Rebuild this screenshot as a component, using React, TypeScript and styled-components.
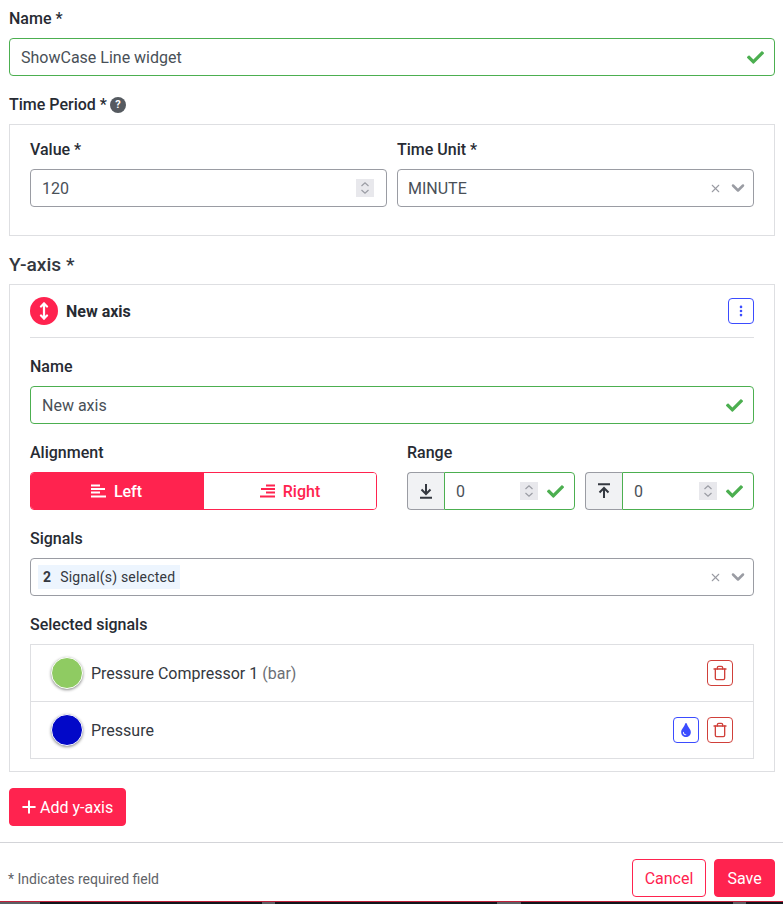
import React from 'react';
import styled, { createGlobalStyle } from 'styled-components';
import { ChevronDown, X, Plus, Trash, MoveVertical, EllipsisVertical } from 'lucide-react';
import { FaCheck, FaTint } from 'react-icons/fa';

const GlobalStyle = createGlobalStyle`
  html, body { margin: 0; padding: 0; background: #fff; }
  body { font-family: Roboto, "Noto Sans", sans-serif; color: #272b33; }
`;

const Page = styled.div`
  width: 783px;
  height: 904px;
  overflow: hidden;
  display: flex;
  flex-direction: column;
`;

const Form = styled.div`
  padding: 10px 8px 0 9px;
`;

const Label = styled.div`
  font-size: 16px;
  font-weight: 500;
  line-height: 18px;
  color: #272b33;
  margin-bottom: 10px;
  display: flex;
  align-items: center;
  gap: 3px;
`;

const PeriodLabel = styled(Label)`
  margin: 20px 0 0;
`;

const HelpDot = styled.span`
  width: 16px;
  height: 16px;
  border-radius: 50%;
  background: #555a60;
  color: #fff;
  font-size: 11px;
  font-weight: 700;
  display: inline-flex;
  align-items: center;
  justify-content: center;
`;

const Field = styled.div<{ $valid?: boolean }>`
  height: 38px;
  box-sizing: border-box;
  border: 1px solid ${p => (p.$valid ? '#4caf50' : '#9a9ca3')};
  border-radius: 4px;
  display: flex;
  align-items: center;
  padding: 0 10px 0 11px;
  font-size: 16px;
  color: #495057;
  background: #fff;
`;

const SelectField = styled(Field)`
  padding: 0 12px 0 10px;
`;

const Grow = styled.span`
  flex: 1;
`;

const Fieldset = styled.div`
  margin-top: 10px;
  border: 1px solid #dedfe2;
  padding: 16px 20px 28px;
  height: 112px;
  box-sizing: border-box;
  display: grid;
  grid-template-columns: 357px 357px;
  column-gap: 10px;
`;

const Heading = styled.div`
  font-size: 19.2px;
  font-weight: 500;
  line-height: 22px;
  color: #343840;
  margin-top: 18px;
`;

const AxisCard = styled.div`
  margin-top: 8px;
  border: 1px solid #dedfe2;
  padding: 12px 20px 12px;
  height: 488px;
  box-sizing: border-box;
`;

const AxisHeader = styled.div`
  display: flex;
  align-items: center;
  gap: 8px;
  height: 28px;
  padding-bottom: 12px;
  border-bottom: 1px solid #dedfe2;
  margin-bottom: 20px;
`;

const AxisBadge = styled.span`
  width: 28px;
  height: 28px;
  border-radius: 50%;
  background: #ff234f;
  color: #fff;
  display: inline-flex;
  align-items: center;
  justify-content: center;
`;

const AxisTitle = styled.span`
  font-size: 16px;
  font-weight: 700;
  flex: 1;
  color: #272b33;
`;

const IconButton = styled.button<{ $tone: 'blue' | 'red' }>`
  width: 26px;
  height: 26px;
  padding: 0;
  border-radius: 4px;
  background: #fff;
  border: 1px solid ${p => (p.$tone === 'blue' ? '#3b4cff' : '#d0403a')};
  color: ${p => (p.$tone === 'blue' ? '#3b4cff' : '#d0403a')};
  display: inline-flex;
  align-items: center;
  justify-content: center;
`;

const TwoCols = styled.div`
  display: grid;
  grid-template-columns: 347px 347px;
  column-gap: 30px;
  margin-top: 20px;
`;

const Segments = styled.div`
  display: flex;
  height: 38px;
  box-sizing: border-box;
  border: 1px solid #ff234f;
  border-radius: 4px;
  overflow: hidden;
`;

const Segment = styled.div<{ $active?: boolean }>`
  flex: ${p => (p.$active ? '0 0 173px' : '1')};
  box-sizing: border-box;
  padding-right: ${p => (p.$active ? '2px' : '0')};
  display: flex;
  align-items: center;
  justify-content: center;
  gap: 8px;
  font-size: 16px;
  font-weight: 500;
  background: ${p => (p.$active ? '#ff234f' : '#fff')};
  color: ${p => (p.$active ? '#fff' : '#ff234f')};
`;

const RangeRow = styled.div`
  display: grid;
  grid-template-columns: 168px 169px;
  column-gap: 10px;
`;

const RangeGroup = styled.div`
  display: flex;
  height: 38px;
`;

const RangeAddon = styled.div`
  width: 37px;
  box-sizing: border-box;
  background: #f1f2f4;
  border: 1px solid #9a9ca3;
  border-right: none;
  border-radius: 4px 0 0 4px;
  display: flex;
  align-items: center;
  justify-content: center;
  color: #343840;
`;

const RangeInput = styled(Field)`
  flex: 1;
  border-radius: 0 4px 4px 0;
`;

const Spinner = styled.span<{ $gap: number }>`
  width: 18px;
  height: 18px;
  background: #e8e8ec;
  color: #9a9ca3;
  margin-right: ${p => p.$gap}px;
  display: inline-flex;
  align-items: center;
  justify-content: center;
`;

const Section = styled.div`
  margin-top: 20px;
`;

const ValueChip = styled.span`
  background: #edf5fe;
  height: 24px;
  display: inline-flex;
  align-items: center;
  padding: 0 5px;
  gap: 9px;
  font-size: 14px;
  letter-spacing: 0.2px;
  color: #343840;
  margin-left: -3px;
`;

const ChipCount = styled.b`
  font-weight: 700;
  font-size: 14px;
`;

const ClearIcon = styled.span`
  color: #9a9ca3;
  display: inline-flex;
  margin-right: 6px;
`;

const Caret = styled.span`
  color: #9a9ca3;
  display: inline-flex;
  margin-right: -7px;
`;

const SignalList = styled.div`
  border: 1px solid #dedfe2;
`;

const SignalRow = styled.div`
  height: 56px;
  box-sizing: border-box;
  display: flex;
  align-items: center;
  padding: 0 20px;
  gap: 8px;
  font-size: 16px;
  color: #343840;
  & + & {
    border-top: 1px solid #dedfe2;
    height: 57px;
  }
`;

const Swatch = styled.span<{ $color: string }>`
  width: 32px;
  height: 32px;
  border-radius: 50%;
  box-sizing: border-box;
  background: ${p => p.$color};
  border: 1px solid #fff;
  box-shadow: 0 1px 3px rgba(0, 0, 0, 0.45);
`;

const Unit = styled.span`
  color: #6c6f76;
`;

const RowActions = styled.span`
  display: flex;
  gap: 8px;
`;

const PrimaryButton = styled.button`
  height: 38px;
  border: 1px solid #ff234f;
  border-radius: 4px;
  background: #ff234f;
  color: #fff;
  font-family: inherit;
  font-size: 16px;
  padding: 0;
  width: 61px;
  display: inline-flex;
  align-items: center;
  justify-content: center;
`;

const AddButton = styled(PrimaryButton)`
  margin-top: 16px;
  width: 117px;
  padding-left: 9px;
  justify-content: flex-start;
  gap: 1px;
`;

const Footer = styled.div`
  margin-top: 16px;
  border-top: 1px solid #d3d4d8;
  padding: 16px 8px 0 8px;
  display: flex;
  align-items: center;
  gap: 8px;
`;

const Note = styled.span`
  flex: 1;
  font-size: 14px;
  color: #5f6368;
  padding-top: 2px;
`;

const CancelButton = styled(PrimaryButton)`
  width: 74px;
  background: #fff;
  color: #ff234f;
`;

const BottomEdge = styled.div`
  margin-top: auto;
  height: 3px;
  box-sizing: border-box;
  border-top: 1px solid #c0203a;
  background: linear-gradient(
    to right,
    #5b5f64 0 40px,
    #10151c 40px 262px,
    #5b5f64 262px 275px,
    #10151c 275px 497px,
    #5b5f64 497px 521px,
    #10151c 521px 733px,
    #5b5f64 733px 746px,
    #10151c 746px
  );
`;

const Tick = () => <FaCheck size={17} color="#4caf50" />;

const Stepper = ({ gap }: { gap: number }) => (
  <Spinner $gap={gap}>
    <svg width="10" height="14" viewBox="0 0 10 14" fill="none" stroke="currentColor" strokeWidth="1.2">
      <path d="M1.5 5 5 1.8 8.5 5" />
      <path d="M1.5 9 5 12.2 8.5 9" />
    </svg>
  </Spinner>
);

const SelectControls = () => (
  <>
    <ClearIcon><X size={13} strokeWidth={2} /></ClearIcon>
    <Caret><ChevronDown size={20} strokeWidth={3} /></Caret>
  </>
);

const AlignLeftIcon = () => (
  <svg width="15" height="14" viewBox="0 0 15 14" fill="none" stroke="currentColor" strokeWidth="1.8">
    <path d="M0 1.5h9M0 5h14M0 8.5h9M0 12.5h15" />
  </svg>
);

const AlignRightIcon = () => (
  <svg width="15" height="14" viewBox="0 0 15 14" fill="none" stroke="currentColor" strokeWidth="1.8">
    <path d="M6 1.5h9M1 5h14M6 8.5h9M0 12.5h15" />
  </svg>
);

const FloorIcon = () => (
  <svg width="14" height="16" viewBox="0 0 14 16" fill="none" stroke="currentColor" strokeWidth="2">
    <path d="M7 1v9.5M2.5 6.5 7 11l4.5-4.5M1 14.8h12" />
  </svg>
);

const CeilingIcon = () => (
  <svg width="14" height="16" viewBox="0 0 14 16" fill="none" stroke="currentColor" strokeWidth="2">
    <path d="M7 15V5.5M2.5 9.5 7 5l4.5 4.5M1 1.2h12" />
  </svg>
);

export default function App() {
  return (
    <Page>
      <GlobalStyle />
      <Form>
        <Label>Name *</Label>
        <Field $valid>
          <Grow>ShowCase Line widget</Grow>
          <Tick />
        </Field>

        <PeriodLabel>
          Time Period * <HelpDot>?</HelpDot>
        </PeriodLabel>
        <Fieldset>
          <div>
            <Label>Value *</Label>
            <Field>
              <Grow>120</Grow>
              <Stepper gap={2} />
            </Field>
          </div>
          <div>
            <Label>Time Unit *</Label>
            <SelectField>
              <Grow>MINUTE</Grow>
              <SelectControls />
            </SelectField>
          </div>
        </Fieldset>

        <Heading>Y-axis *</Heading>
        <AxisCard>
          <AxisHeader>
            <AxisBadge><MoveVertical size={18} strokeWidth={3} /></AxisBadge>
            <AxisTitle>New axis</AxisTitle>
            <IconButton $tone="blue"><EllipsisVertical size={14} strokeWidth={2.5} /></IconButton>
          </AxisHeader>

          <Label>Name</Label>
          <Field $valid>
            <Grow>New axis</Grow>
            <Tick />
          </Field>

          <TwoCols>
            <div>
              <Label>Alignment</Label>
              <Segments>
                <Segment $active><AlignLeftIcon />Left</Segment>
                <Segment><AlignRightIcon />Right</Segment>
              </Segments>
            </div>
            <div>
              <Label>Range</Label>
              <RangeRow>
                <RangeGroup>
                  <RangeAddon><FloorIcon /></RangeAddon>
                  <RangeInput $valid>
                    <Grow>0</Grow>
                    <Stepper gap={9} />
                    <Tick />
                  </RangeInput>
                </RangeGroup>
                <RangeGroup>
                  <RangeAddon><CeilingIcon /></RangeAddon>
                  <RangeInput $valid>
                    <Grow>0</Grow>
                    <Stepper gap={9} />
                    <Tick />
                  </RangeInput>
                </RangeGroup>
              </RangeRow>
            </div>
          </TwoCols>

          <Section>
            <Label>Signals</Label>
            <SelectField>
              <Grow>
                <ValueChip><ChipCount>2</ChipCount> Signal(s) selected</ValueChip>
              </Grow>
              <SelectControls />
            </SelectField>
          </Section>

          <Section>
            <Label>Selected signals</Label>
            <SignalList>
              <SignalRow>
                <Swatch $color="#8fcb62" />
                <Grow>Pressure Compressor 1 <Unit>(bar)</Unit></Grow>
                <RowActions>
                  <IconButton $tone="red"><Trash size={16} /></IconButton>
                </RowActions>
              </SignalRow>
              <SignalRow>
                <Swatch $color="#0208c8" />
                <Grow>Pressure</Grow>
                <RowActions>
                  <IconButton $tone="blue"><FaTint size={14} /></IconButton>
                  <IconButton $tone="red"><Trash size={16} /></IconButton>
                </RowActions>
              </SignalRow>
            </SignalList>
          </Section>
        </AxisCard>

        <AddButton><Plus size={20} strokeWidth={2.4} />Add y-axis</AddButton>
      </Form>

      <Footer>
        <Note>* Indicates required field</Note>
        <CancelButton>Cancel</CancelButton>
        <PrimaryButton>Save</PrimaryButton>
      </Footer>
      <BottomEdge />
    </Page>
  );
}
